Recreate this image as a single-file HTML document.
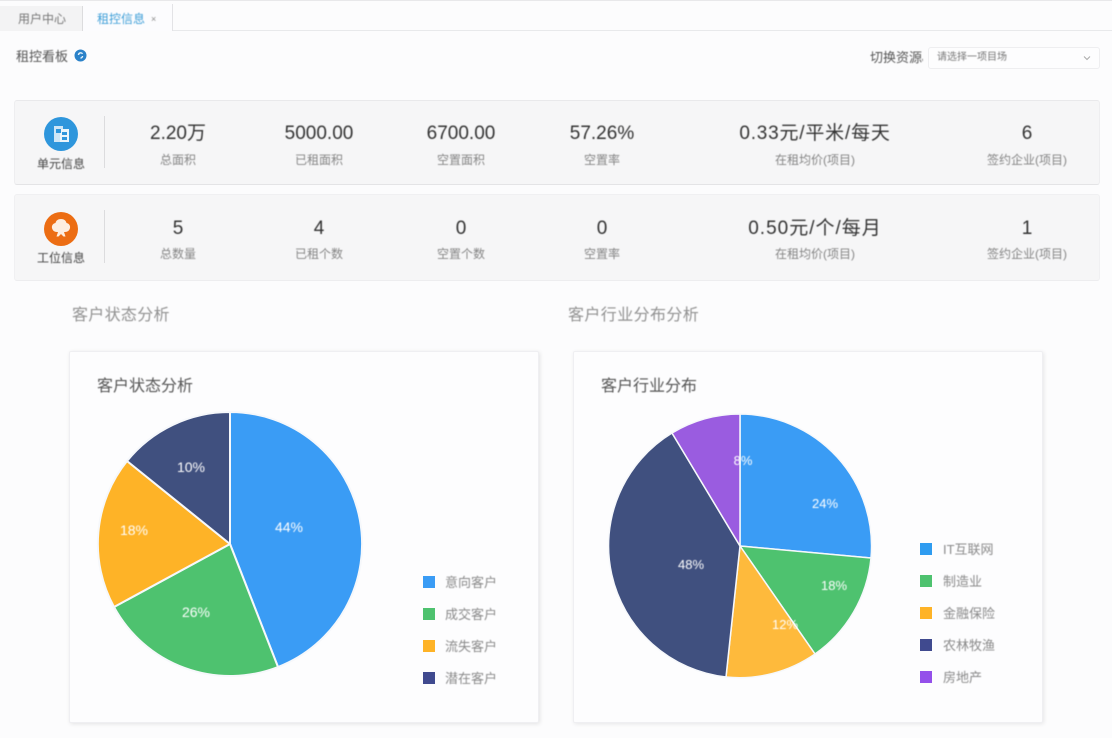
<!DOCTYPE html>
<html lang="zh-CN">
<head>
<meta charset="utf-8">
<title>租控信息</title>
<style>
html,body{margin:0;padding:0;}
body{width:1112px;height:738px;overflow:hidden;background:#fcfcfd;position:relative;font-family:"Liberation Sans","Noto Sans CJK SC",sans-serif;color:#444;}
.a{position:absolute;white-space:nowrap;line-height:1;}
.c{transform:translateX(-50%);}
.box{position:absolute;box-sizing:border-box;}
.t{filter:blur(.45px);}
.num{font-size:19px;color:#333;}
.lab{font-size:12px;color:#858585;}
.leg{font-size:13px;color:#8a8a8a;}
.sw{position:absolute;width:12px;height:12px;}
.side{font-size:12px;color:#444;}
</style>
</head>
<body>
<!-- tab bar -->
<div class="box" style="left:0;top:0;width:1112px;height:1px;background:#e8e8ea;"></div>
<div class="box" style="left:0;top:30px;width:1112px;height:1px;background:#e8e9eb;"></div>
<div class="box" style="left:0;top:6px;width:83px;height:25px;background:#f3f3f4;border-right:1px solid #dcdcde;"></div>
<div class="box" style="left:83px;top:4px;width:90px;height:27px;background:#fcfcfe;border-right:1px solid #e3e3e6;"></div>
<div class="a t" style="left:18px;top:13px;font-size:12px;color:#777;">用户中心</div>
<div class="a t" style="left:97px;top:13px;font-size:12px;color:#3f9fd8;">租控信息</div>
<div class="a t" style="left:151px;top:15px;font-size:9px;color:#888;">×</div>

<!-- sub header -->
<div class="a t" style="left:16px;top:50px;font-size:13px;color:#555;">租控看板</div>
<svg class="a" style="left:74px;top:49px;" width="13" height="13" viewBox="0 0 13 13"><circle cx="6.5" cy="6.5" r="6" fill="#2b82c9"/><path d="M4.500 6a2.200 2.200 0 0 1 4-1.200M8.500 7a2 2 0 0 1-2 2" stroke="#e8f4fb" stroke-width="1.400" fill="none"/></svg>
<div class="a t" style="left:870px;top:51px;font-size:13px;color:#555;">切换资源</div>
<div class="a t" style="left:921px;top:53px;font-size:10px;color:#777;">,</div>
<div class="box" style="left:928px;top:47px;width:172px;height:22px;background:#fdfdfe;border:1px solid #eeeef0;border-radius:3px;"></div>
<div class="a t" style="left:937px;top:53px;font-size:10px;color:#777;">请选择一项目场</div>
<svg class="a" style="left:1083px;top:55px;" width="8" height="6" viewBox="0 0 8 6"><path d="M1 1.500L4 4.500L7 1.500" stroke="#aaa" fill="none"/></svg>

<!-- row 1 -->
<div class="box" style="left:14px;top:100px;width:1086px;height:85px;background:#f6f6f7;border:1px solid #eeeef0;border-top:1px solid #e9e9eb;border-bottom:1px solid #e4e4e6;border-radius:3px;"></div>
<div class="box" style="left:104px;top:116px;width:1px;height:52px;background:#dcdcde;"></div>
<svg class="a" style="left:44px;top:117px;" width="34" height="34" viewBox="0 0 34 34"><circle cx="17" cy="17" r="17" fill="#2e96dc"/><rect x="10" y="9" width="9" height="16" fill="#cfe6f6"/><rect x="16" y="12" width="9" height="13" fill="#eaf5fb"/><rect x="12" y="12" width="5" height="4" fill="#2e96dc"/><rect x="18" y="15" width="5" height="3" fill="#2e96dc"/><rect x="18" y="20" width="5" height="3" fill="#2e96dc"/></svg>
<div class="a c t side" style="left:61px;top:158px;">单元信息</div>
<div class="a c t num" style="left:178px;top:124px;">2.20万</div>
<div class="a c t lab" style="left:178px;top:154px;">总面积</div>
<div class="a c t num" style="left:319px;top:124px;">5000.00</div>
<div class="a c t lab" style="left:319px;top:154px;">已租面积</div>
<div class="a c t num" style="left:461px;top:124px;">6700.00</div>
<div class="a c t lab" style="left:461px;top:154px;">空置面积</div>
<div class="a c t num" style="left:602px;top:124px;">57.26%</div>
<div class="a c t lab" style="left:602px;top:154px;">空置率</div>
<div class="a c t num" style="left:815px;top:124px;letter-spacing:.8px;">0.33元/平米/每天</div>
<div class="a c t lab" style="left:815px;top:154px;">在租均价(项目)</div>
<div class="a c t num" style="left:1027px;top:124px;">6</div>
<div class="a c t lab" style="left:1027px;top:154px;">签约企业(项目)</div>

<!-- row 2 -->
<div class="box" style="left:14px;top:194px;width:1086px;height:87px;background:#f6f6f7;border:1px solid #f0f0f2;border-bottom:1px solid #ededef;border-radius:3px;"></div>
<div class="box" style="left:104px;top:210px;width:1px;height:53px;background:#dcdcde;"></div>
<svg class="a" style="left:44px;top:212px;" width="34" height="34" viewBox="0 0 34 34"><circle cx="17" cy="17" r="17" fill="#ec6d13"/><path d="M17 7c3 0 5 1.500 5.500 4 2.500.5 4 2.500 3.500 5-.5 2.500-2.500 4-5 4h-1l1.500 4.500h-2L17 22l-2.500 2.500h-2L14 20h-1c-2.500 0-4.500-1.500-5-4-.5-2.500 1-4.500 3.500-5C12 8.500 14 7 17 7z" fill="#fdeee0"/></svg>
<div class="a c t side" style="left:61px;top:252px;">工位信息</div>
<div class="a c t num" style="left:178px;top:219px;">5</div>
<div class="a c t lab" style="left:178px;top:248px;">总数量</div>
<div class="a c t num" style="left:319px;top:219px;">4</div>
<div class="a c t lab" style="left:319px;top:248px;">已租个数</div>
<div class="a c t num" style="left:461px;top:219px;">0</div>
<div class="a c t lab" style="left:461px;top:248px;">空置个数</div>
<div class="a c t num" style="left:602px;top:219px;">0</div>
<div class="a c t lab" style="left:602px;top:248px;">空置率</div>
<div class="a c t num" style="left:815px;top:219px;letter-spacing:1px;">0.50元/个/每月</div>
<div class="a c t lab" style="left:815px;top:248px;">在租均价(项目)</div>
<div class="a c t num" style="left:1027px;top:219px;">1</div>
<div class="a c t lab" style="left:1027px;top:248px;">签约企业(项目)</div>

<!-- section titles -->
<div class="a t" style="left:72px;top:308px;font-size:16px;color:#919191;letter-spacing:.3px;">客户状态分析</div>
<div class="a t" style="left:568px;top:308px;font-size:16px;color:#919191;letter-spacing:.4px;">客户行业分布分析</div>

<!-- cards -->
<div class="box" style="left:69px;top:351px;width:470px;height:372px;background:#fdfdfe;border:1px solid #efeff2;border-radius:2px;box-shadow:1px 1px 4px rgba(0,0,0,.10);"></div>
<div class="box" style="left:573px;top:351px;width:470px;height:372px;background:#fdfdfe;border:1px solid #efeff2;border-radius:2px;box-shadow:1px 1px 4px rgba(0,0,0,.09);"></div>
<div class="a t" style="left:97px;top:379px;font-size:16px;color:#555;">客户状态分析</div>
<div class="a t" style="left:601px;top:379px;font-size:16px;color:#555;">客户行业分布</div>

<!-- pies -->
<svg class="a" style="left:0;top:0;" width="1112" height="738" viewBox="0 0 1112 738">
<g stroke="#f6f8fb" stroke-width="2" stroke-linejoin="round">
<path d="M230 544L230 412A132 132 0 0 1 278 667Z" fill="#3a9cf5"/>
<path d="M230 544L278 667A132 132 0 0 1 114 607Z" fill="#4ec26f"/>
<path d="M230 544L114 607A132 132 0 0 1 127 461Z" fill="#feb327"/>
<path d="M230 544L127 461A132 132 0 0 1 230 412Z" fill="#40507f"/>
</g>
<g stroke="#f6f8fb" stroke-width="1.500" stroke-linejoin="round">
<path d="M740 546L740 414A132 132 0 0 1 871 558Z" fill="#3a9cf5"/>
<path d="M740 546L871 558A132 132 0 0 1 815 654Z" fill="#4ec26f"/>
<path d="M740 546L815 654A132 132 0 0 1 726 677Z" fill="#feba3c"/>
<path d="M740 546L726 677A132 132 0 0 1 672 433Z" fill="#40507f"/>
<path d="M740 546L672 433A132 132 0 0 1 740 414Z" fill="#9a5ce0"/>
</g>
</svg>
<div class="a c t" style="left:289px;top:520px;font-size:14px;color:#fff;">44%</div>
<div class="a c t" style="left:191px;top:460px;font-size:14px;color:#fff;">10%</div>
<div class="a c t" style="left:134px;top:523px;font-size:14px;color:#fff;">18%</div>
<div class="a c t" style="left:196px;top:605px;font-size:14px;color:#fff;">26%</div>
<div class="a c t" style="left:743px;top:454px;font-size:13px;color:#fff;">8%</div>
<div class="a c t" style="left:825px;top:497px;font-size:13px;color:#fff;">24%</div>
<div class="a c t" style="left:834px;top:579px;font-size:13px;color:#fff;">18%</div>
<div class="a c t" style="left:785px;top:618px;font-size:13px;color:#fff;">12%</div>
<div class="a c t" style="left:691px;top:558px;font-size:13px;color:#fff;">48%</div>

<!-- legends -->
<div class="sw" style="left:423px;top:576px;background:#3a9cf5;"></div>
<div class="sw" style="left:423px;top:608px;background:#4ec26f;"></div>
<div class="sw" style="left:423px;top:640px;background:#feb327;"></div>
<div class="sw" style="left:423px;top:672px;background:#404a8f;"></div>
<div class="a t leg" style="left:445px;top:576px;">意向客户</div>
<div class="a t leg" style="left:445px;top:608px;">成交客户</div>
<div class="a t leg" style="left:445px;top:640px;">流失客户</div>
<div class="a t leg" style="left:445px;top:672px;">潜在客户</div>

<div class="sw" style="left:920px;top:543px;background:#2f9cf0;"></div>
<div class="sw" style="left:920px;top:575px;background:#4ec26f;"></div>
<div class="sw" style="left:920px;top:607px;background:#feb327;"></div>
<div class="sw" style="left:920px;top:639px;background:#404a8f;"></div>
<div class="sw" style="left:920px;top:671px;background:#9450ea;"></div>
<div class="a t leg" style="left:943px;top:543px;">IT互联网</div>
<div class="a t leg" style="left:943px;top:575px;">制造业</div>
<div class="a t leg" style="left:943px;top:607px;">金融保险</div>
<div class="a t leg" style="left:943px;top:639px;">农林牧渔</div>
<div class="a t leg" style="left:943px;top:671px;">房地产</div>
</body>
</html>
